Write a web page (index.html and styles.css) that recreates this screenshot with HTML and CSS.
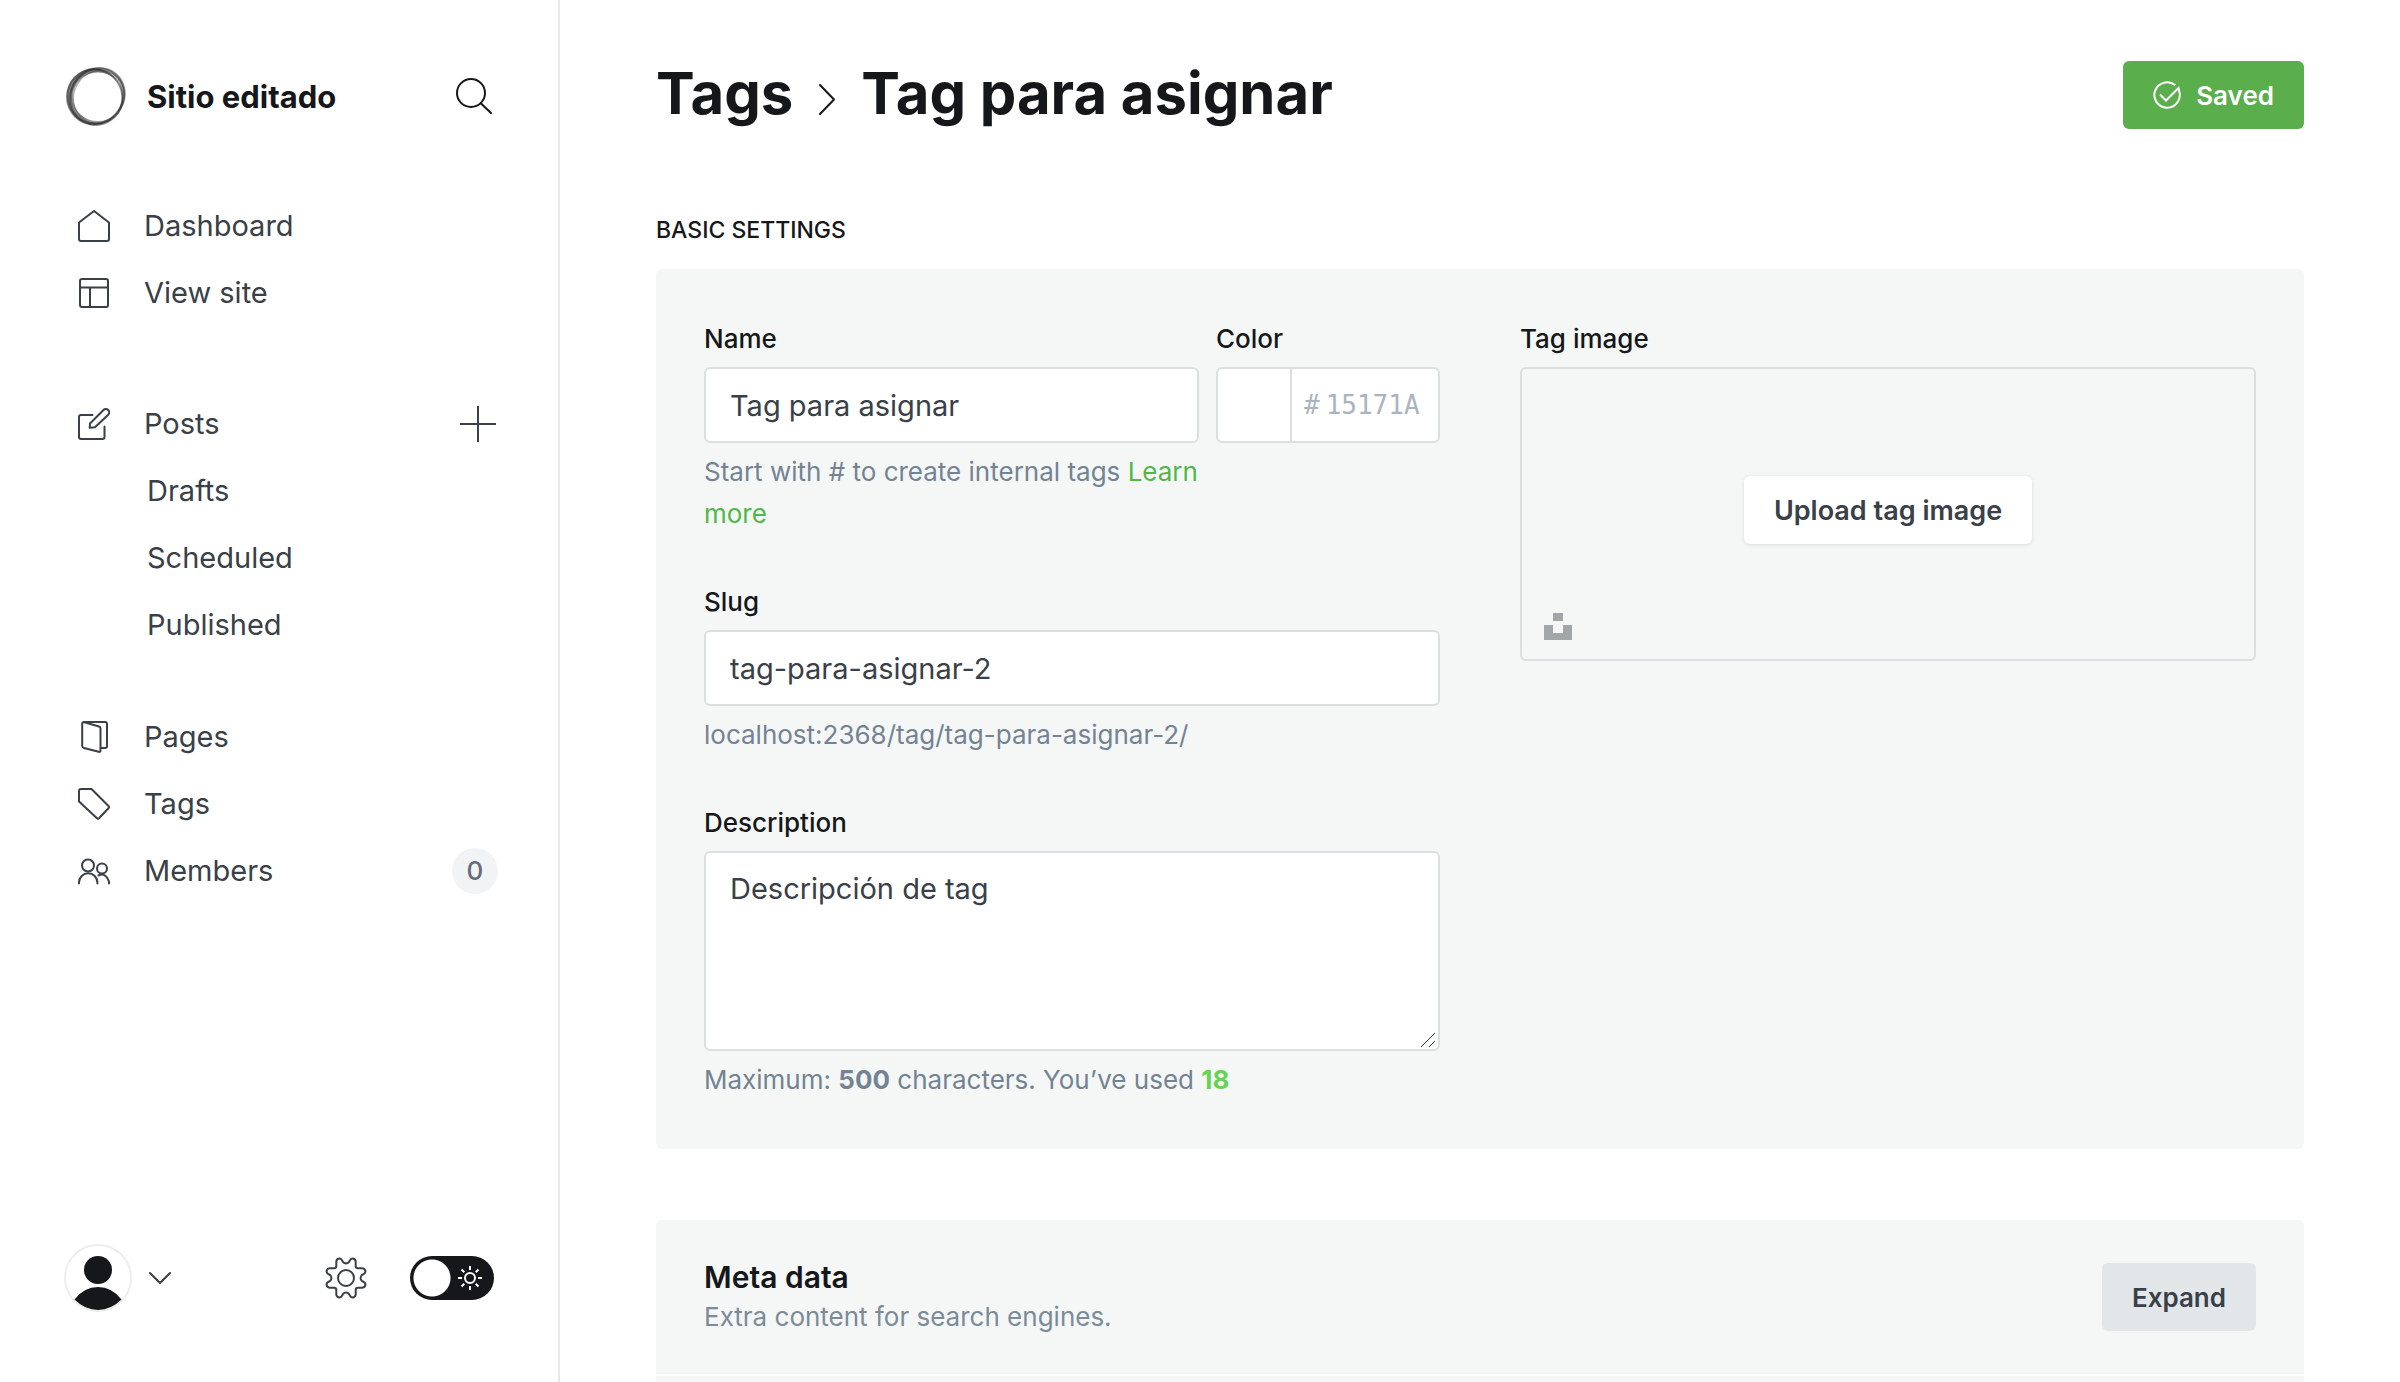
FILE: index.html
```
<!DOCTYPE html>
<html lang="es">
<head>
<meta charset="utf-8">
<meta name="viewport" content="width=device-width, initial-scale=1">
<title>Tags - Sitio editado</title>
<link rel="stylesheet" href="styles.css">
</head>
<body>
<div class="app">
  <aside class="sidebar">
    <div class="site">
      <svg class="site-logo" viewBox="0 0 62 60" aria-hidden="true">
        <g fill="#333" fill-rule="evenodd">
          <path opacity=".5" d="M1 31a28 28.500 0 1 0 56 0a28 28.500 0 1 0-56 0ZM8 31a25 24.500 0 1 0 50 0a25 24.500 0 1 0-50 0Z"/>
          <path opacity=".3" d="M5 28a28 27 0 1 0 56 0a28 27 0 1 0-56 0ZM7 31a25.500 25 0 1 0 51 0a25.500 25 0 1 0-51 0Z"/>
        </g>
        <g fill="none" stroke="#222">
          <ellipse cx="30" cy="31" rx="27" ry="28" stroke-width="2" opacity=".5" transform="rotate(-35 30 31)"/>
          <ellipse cx="32" cy="30" rx="29" ry="26" stroke-width="2" opacity=".4" transform="rotate(-48 32 30)"/>
          <ellipse cx="32" cy="30" rx="26" ry="28" stroke-width="2" opacity=".35" transform="rotate(30 32 30)"/>
          <ellipse cx="34" cy="31" rx="27" ry="25" stroke-width="1" opacity=".4" transform="rotate(-60 34 31)"/>
        </g>
      </svg>
      <span class="site-name">Sitio editado</span>
      <button class="icon-button" type="button" aria-label="Search">
        <svg width="36" height="36" viewBox="0 0 36 36"><circle cx="15" cy="15" r="14"/><path d="M25 25.500 35 35"/></svg>
      </button>
    </div>

    <nav class="nav">
      <ul class="nav-group">
        <li class="nav-row"><a href="#dashboard"><svg width="32" height="32" viewBox="0 0 32 32"><path d="M1 12.500 16 1l15 11.500V29q0 2-2 2H3q-2 0-2-2Z"/></svg>Dashboard</a></li>
        <li class="nav-row"><a href="#site"><svg width="32" height="32" viewBox="0 0 32 32"><rect x="2" y="2" width="28" height="28" rx="2"/><path d="M2 10.500h28M12 10.500V30"/></svg>View site</a></li>
      </ul>
      <ul class="nav-group nav-posts">
        <li class="nav-row"><a href="#posts"><svg width="32" height="32" viewBox="0 0 32 32"><path d="M14.500 7H3Q1 7 1 9v20q0 2 2 2h21.500q2 0 2-2V18.500"/><path d="M11.700 19.800 12 15.500 25.500 2a3.300 3.300 0 0 1 4.700 4.700L17 19.300Z"/></svg>Posts</a>
          <button class="icon-button" type="button" aria-label="New post"><svg width="36" height="36" viewBox="0 0 36 36"><path d="M18 0v36M0 18h36"/></svg></button></li>
        <li class="nav-row nav-sub"><a href="#drafts">Drafts</a></li>
        <li class="nav-row nav-sub"><a href="#scheduled">Scheduled</a></li>
        <li class="nav-row nav-sub"><a href="#published">Published</a></li>
      </ul>
      <ul class="nav-group">
        <li class="nav-row"><a href="#pages"><svg width="32" height="32" viewBox="0 0 32 32"><path d="M5.500 1 21 5.500q1.500.5 1.500 2V29.500q0 1.800-1.800 1.300L6 27q-1.800-.5-1.800-2V2.500Q4.200 1 6 1H27q2 0 2 2V25q0 2-2 2H23"/></svg>Pages</a></li>
        <li class="nav-row"><a href="#tags"><svg width="32" height="32" viewBox="0 0 32 32"><path d="M1 3q0-2 2-2h10.500L30.500 18q1 1.200 0 2.200L21 30.300q-1 1-2 0L1 13.500Z"/></svg>Tags</a></li>
        <li class="nav-row"><a href="#members"><svg width="32" height="32" viewBox="0 0 32 32"><circle cx="10" cy="10.500" r="6"/><circle cx="24" cy="13.500" r="5"/><path d="M1 28.500V27.500a9.200 9.200 0 0 1 18.400 0v1M20.500 20.500q7-3.500 10.500 6v2"/></svg>Members</a>
          <span class="badge">0</span></li>
      </ul>
    </nav>

    <div class="user-bar">
      <button class="user-menu" type="button" aria-label="User menu">
        <svg class="avatar" width="68" height="68" viewBox="0 0 68 68"><circle class="avatar-ring" cx="34" cy="34" r="33"/><circle cx="34" cy="26" r="14"/><path d="M10.500 55.500Q20 43 34 43t23.500 12.500Q47 66 34 66T10.500 55.500Z"/></svg>
        <svg class="line-icon" width="24" height="14" viewBox="0 0 24 14"><path d="m2 2 10 10L22 2"/></svg>
      </button>
      <a class="settings" href="#settings" aria-label="Settings">
        <svg class="line-icon" width="42" height="42" viewBox="-21 -21 42 42"><circle r="8"/><path d="M-9.700-12V-15.500C-10-19.500-5.800-20.500-4.200-18L-2.800-15.800C-1.500-14.200 1.500-14.200 2.800-15.800L4.200-18C5.800-20.500 10-19.500 9.700-15.500V-12Q9.700-9.700 12-9.700H15.500C19.500-10 20.500-5.800 18-4.200L15.800-2.800C14.200-1.500 14.200 1.500 15.800 2.800L18 4.200C20.500 5.800 19.500 10 15.500 9.700H12Q9.700 9.700 9.700 12V15.500C10 19.500 5.800 20.500 4.200 18L2.800 15.800C1.500 14.200-1.500 14.200-2.800 15.800L-4.200 18C-5.800 20.500-10 19.500-9.700 15.500V12Q-9.700 9.700-12 9.700H-15.500C-19.500 10-20.500 5.800-18 4.200L-15.800 2.800C-14.200 1.500-14.200-1.500-15.800-2.800L-18-4.200C-20.500-5.800-19.500-10-15.500-9.700H-12Q-9.700-9.700-9.700-12Z"/></svg>
      </a>
      <label class="theme-toggle" aria-label="Dark mode">
        <input type="checkbox">
        <svg width="24" height="24" viewBox="-12 -12 24 24"><circle r="5"/><path d="M0-8v-4M0 8v4M-8 0h-4M8 0h4M-5.700-5.700-8.500-8.500M5.700-5.700 8.500-8.500M-5.700 5.700-8.500 8.500M5.700 5.700 8.500 8.500"/></svg>
      </label>
    </div>
  </aside>

  <main class="main">
    <header class="page-header">
      <h1 class="page-title"><a href="#tags">Tags</a>
        <svg class="crumb" width="18" height="44" viewBox="0 0 18 44"><path d="M2 14 16 28.500 2 43"/></svg>
        Tag para asignar</h1>
      <button class="button button-green" type="button">
        <svg width="28" height="28" viewBox="0 0 28 28"><path d="M22.300 4.300A12.700 12.700 0 1 0 26.300 10.500L25.500 7 13 19.500 7 13.500"/></svg>Saved</button>
    </header>

    <form class="settings-form">
      <h2 class="section-title">Basic settings</h2>
      <section class="panel columns">
        <div class="column">
          <div class="name-row">
            <div class="field name-field">
              <label for="tag-name">Name</label>
              <input class="input" id="tag-name" type="text" value="Tag para asignar">
              <p class="hint">Start with # to create internal tags <a href="#learn">Learn more</a></p>
            </div>
            <div class="field color-field">
              <label for="tag-color">Color</label>
              <div class="color-input">
                <span class="swatch"></span>
                <span>#</span>
                <input id="tag-color" type="text" placeholder="15171A">
              </div>
            </div>
          </div>
          <div class="field">
            <label for="tag-slug">Slug</label>
            <input class="input" id="tag-slug" type="text" value="tag-para-asignar-2">
            <p class="hint">localhost:2368/tag/tag-para-asignar-2/</p>
          </div>
          <div class="field">
            <label for="tag-description">Description</label>
            <div class="textarea-wrap">
              <textarea class="input textarea" id="tag-description">Descripción de tag</textarea>
              <svg class="grip" width="16" height="16" viewBox="0 0 16 16"><path d="M1 15 15 1M9 15l6-6"/></svg>
            </div>
            <p class="hint">Maximum: <b>500</b> characters. You’ve used <b class="count">18</b></p>
          </div>
        </div>
        <div class="column">
          <div class="field">
            <label for="tag-upload">Tag image</label>
            <div class="dropzone">
              <button class="button button-white" id="tag-upload" type="button">Upload tag image</button>
              <button class="unsplash" type="button" aria-label="Unsplash"><svg width="28" height="27" viewBox="0 0 28 27"><path d="M9 0h10v8H9zM0 12h9v8h10v-8h9v15H0z"/></svg></button>
            </div>
          </div>
        </div>
      </section>

      <div class="panel-stack">
        <section class="panel expandable">
          <div>
            <h3 class="panel-title">Meta data</h3>
            <p class="panel-text">Extra content for search engines.</p>
          </div>
          <button class="button button-grey" type="button">Expand</button>
        </section>
        <section class="panel expandable"></section>
      </div>
    </form>
  </main>
</div>
</body>
</html>
```
FILE: styles.css
```
* {
  box-sizing: border-box;
}

body,
h1,
h2,
h3,
p,
ul {
  margin: 0;
  padding: 0;
}

body {
  font-family: Inter, "Liberation Sans", sans-serif;
  font-size: 29px;
  color: #15171a;
  background: #fff;
}

a {
  color: inherit;
  text-decoration: none;
}

button,
input,
textarea {
  font: inherit;
  color: inherit;
}

button {
  padding: 0;
  border: 0;
  background: none;
  cursor: pointer;
}

svg {
  display: block;
  flex: none;
}

.app {
  display: flex;
  height: 100vh;
  overflow: hidden;
}

/* Sidebar */
.sidebar {
  display: flex;
  flex-direction: column;
  flex: none;
  width: 560px;
  padding: 66px 0 70px;
  border-right: 2px solid #e8e9ea;
}

.site {
  display: flex;
  align-items: center;
  gap: 20px;
  padding: 0 66px 0 65px;
}

.site-logo {
  width: 62px;
  height: 60px;
}

.site-name {
  flex: 1;
  font-size: 31px;
  font-weight: 700;
}

.icon-button svg,
.nav svg,
.line-icon {
  fill: none;
  stroke: currentColor;
  stroke-width: 2;
  stroke-linecap: round;
  stroke-linejoin: round;
}

.nav {
  margin-top: 66px;
  padding: 0 60px 0 78px;
  color: #394047;
}

.nav-group {
  list-style: none;
}

.nav-posts {
  margin: 64px 0 45px;
}

.nav-row {
  display: flex;
  align-items: center;
  justify-content: space-between;
  height: 67px;
}

.nav-row a {
  display: flex;
  align-items: center;
  gap: 34px;
}

.nav-row .icon-button {
  margin-right: 2px;
}

.nav-sub {
  padding-left: 69px;
}

.badge {
  display: flex;
  align-items: center;
  justify-content: center;
  width: 46px;
  height: 46px;
  border-radius: 50%;
  font-size: 26px;
  font-weight: 500;
  color: #626d79;
  background: #f1f3f4;
}

.user-bar {
  display: flex;
  align-items: center;
  margin-top: auto;
  padding: 0 64px;
  color: #394047;
}

.user-menu {
  display: flex;
  align-items: center;
  gap: 16px;
}

.avatar {
  fill: #15171a;
}

.avatar-ring {
  fill: #fff;
  stroke: #ebeeed;
  stroke-width: 2;
}

.settings {
  margin: 0 43px 0 auto;
}

.theme-toggle {
  position: relative;
  display: block;
  cursor: pointer;
}

.theme-toggle input {
  display: block;
  width: 84px;
  height: 44px;
  margin: 0;
  border-radius: 22px;
  background: radial-gradient(circle at 22px 22px, #fff 18px, #15171a 19px);
  appearance: none;
}

.theme-toggle svg {
  position: absolute;
  top: 10px;
  right: 12px;
  fill: none;
  stroke: #fff;
  stroke-width: 2;
}

/* Main area */
.main {
  flex: 1;
  min-width: 0;
  padding: 61px 96px 0;
  overflow-y: auto;
  scrollbar-width: none;
}

.page-header {
  display: flex;
  align-items: flex-start;
  justify-content: space-between;
  margin-bottom: 88px;
}

.page-title {
  display: flex;
  align-items: center;
  gap: 25px;
  font-size: 58px;
  line-height: 64px;
  font-weight: 700;
}

.crumb {
  fill: none;
  stroke: currentColor;
  stroke-width: 2;
  stroke-linecap: round;
  stroke-linejoin: round;
}

.button {
  display: flex;
  align-items: center;
  height: 68px;
  padding: 0 30px;
  border-radius: 6px;
  font-size: 26px;
  font-weight: 600;
}

.button-green {
  gap: 15px;
  color: #fff;
  background: #5aae4c;
}

.button-green svg {
  fill: none;
  stroke: currentColor;
  stroke-width: 2;
}

.button-white {
  font-size: 27px;
  color: #394047;
  background: #fff;
  box-shadow: 0 1px 4px rgba(0, 0, 0, 0.12);
}

.button-grey {
  color: #394047;
  background: #e2e6e9;
}

.section-title {
  margin-bottom: 26px;
  font-size: 23px;
  line-height: 26px;
  font-weight: 500;
  text-transform: uppercase;
}

.panel {
  padding: 48px;
  border-radius: 6px;
  background: #f4f7f6;
}

.columns {
  display: grid;
  grid-template-columns: 1fr 1fr;
  gap: 80px;
}

.column {
  display: flex;
  flex-direction: column;
  gap: 45px;
  min-width: 0;
}

.name-row {
  display: flex;
  gap: 17px;
}

.name-field {
  flex: 1;
  min-width: 0;
}

.color-field {
  flex: none;
  width: 224px;
}

.field label {
  display: block;
  margin-bottom: 6px;
  font-size: 26px;
  line-height: 44px;
  font-weight: 500;
}

.input {
  display: block;
  width: 100%;
  height: 76px;
  padding: 0 24px;
  border: 2px solid #dcdfdf;
  border-radius: 6px;
  outline: 0;
  font-size: 29px;
  color: #394047;
  background: #fff;
}

.textarea-wrap {
  position: relative;
}

.textarea {
  height: 200px;
  padding: 16px 24px;
  line-height: 40px;
  resize: none;
}

.grip {
  position: absolute;
  right: 4px;
  bottom: 3px;
  fill: none;
  stroke: #333;
  stroke-width: 1;
}

.hint {
  margin-top: 8px;
  font-size: 26px;
  line-height: 42px;
  color: #738393;
}

.hint a {
  color: #51b748;
}

.count {
  color: #66d354;
}

.color-input {
  display: flex;
  align-items: center;
  gap: 6px;
  height: 76px;
  border: 2px solid #dcdfdf;
  border-radius: 6px;
  font-family: "DejaVu Sans Mono", monospace;
  font-size: 26px;
  color: #abb4be;
  background: #fff;
}

.swatch {
  align-self: stretch;
  flex: none;
  width: 74px;
  margin-right: 6px;
  border-right: 2px solid #dcdfdf;
}

.color-input input {
  flex: 1;
  min-width: 0;
  padding: 0;
  border: 0;
  outline: 0;
  background: none;
}

.color-input input::placeholder {
  color: inherit;
}

.dropzone {
  position: relative;
  display: flex;
  align-items: center;
  justify-content: center;
  min-height: 294px;
  padding-bottom: 8px;
  border: 2px solid #dcdfdf;
  border-radius: 6px;
}

.unsplash {
  position: absolute;
  left: 22px;
  bottom: 19px;
}

.unsplash svg {
  fill: #a3a6a6;
}

.panel-stack {
  display: flex;
  flex-direction: column;
  gap: 2px;
  margin-top: 71px;
}

.panel-stack .panel:first-child {
  border-radius: 6px 6px 0 0;
}

.panel-stack .panel:last-child {
  border-radius: 0 0 6px 6px;
}

.expandable {
  display: flex;
  align-items: center;
  justify-content: space-between;
  min-height: 154px;
  padding: 36px 48px;
}

.panel-title {
  font-size: 30px;
  line-height: 40px;
  font-weight: 600;
}

.panel-text {
  font-size: 26px;
  line-height: 40px;
  color: #7c8b9a;
}
```
